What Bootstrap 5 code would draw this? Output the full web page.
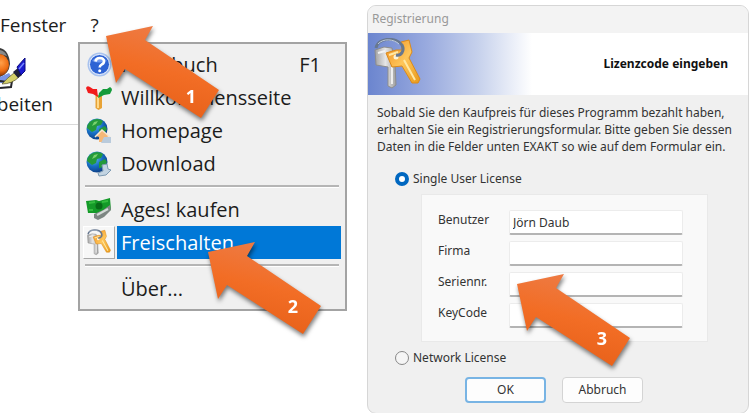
<!DOCTYPE html>
<html lang="de">
<head>
<meta charset="utf-8">
<meta name="viewport" content="width=device-width, initial-scale=1">
<title>Registrierung</title>
<link href="https://cdn.jsdelivr.net/npm/bootstrap@5.3.0/dist/css/bootstrap.min.css" rel="stylesheet">
<style>
body{background:#fff;color:#1c1c1c;font-family:"Noto Sans","Open Sans",sans-serif}
.stage{overflow:hidden}
.app-side{flex:0 0 367px;font-family:"Open Sans","Noto Sans",sans-serif;font-size:19px;line-height:24px}
.menubar{padding-top:13px;padding-left:0;gap:24px}
.menubar button,.tool,.entry,.act{background:none;border:0;padding:0;color:inherit}
.toolstrip{width:75%;height:88px;border-bottom:1px solid #d9d9d9}
.tool{width:53px;overflow:hidden;padding-top:10px}
.tool svg{width:30px;height:45px}
.help-menu{left:78px;top:42px;width:269px;background:#f0f0f0;border:2px solid #a3a3a3;padding:4px 4px 4px 3px;font-size:20px}
.entry{height:33px;width:100%}
.entry .pic{width:32px;height:33px;flex:none;margin-right:2px}
.entry .cap{flex:1;height:33px;padding:0 20px 0 4px;line-height:33px;text-align:left}
.entry.chosen .pic{background:#f7f7f7;border:1px solid #fff;border-right-color:#a8a8a8;border-bottom-color:#a8a8a8}
.entry.chosen .cap{background:#0078d7;color:#fff}
.rule{height:3px;margin:5px 2px;border-top:2px solid #b5b5b5;border-bottom:1px solid #fff}
.reg{margin-top:5px;background:#f0f0f0;border:1px solid #d6d6d6;border-radius:9px;font-size:12px;line-height:16px;overflow:hidden;color:#333}
.cap-bar{background:#f3f3f3;color:#999;height:27px;padding:5px 4px}
.banner{height:62px;background:linear-gradient(90deg,#6b85cf 0,#9aabdf 60px,#c6d1ec 110px,#fff 164px);padding:0 20px 0 6px;color:#111}
.intro{padding:9px 9px 0;line-height:17px}
.opt{margin-left:27px;gap:4px}
.opt input{appearance:none;width:14px;height:14px;margin:0;border:1px solid #888;border-radius:50%;background:#f5f5f5}
.opt input:checked{border:4px solid #0067c0;background:#fff}
.fields{margin:7px 40px 0 53px;background:#f9f9f9;border:1px solid #e9e9e9;padding:15px 24px 13px 16px;gap:6px}
.fields label{width:71px;flex:none;padding-bottom:6px}
.fields input{min-width:0;flex:1;height:25px;border:1px solid #ececec;border-bottom:2px solid #b4b4b4;border-radius:2px;background:#fff;padding:0 3px;color:#333}
.acts{gap:16px;padding:11px 0 10px;margin-right:8px}
.act{width:81px;height:26px;border:1px solid #d4d4d4;border-radius:4px;background:#fdfdfd}
.act.main{border:2px solid #78b4e4}
.pointer{width:130px;height:110px;pointer-events:none;overflow:visible;filter:drop-shadow(1px 3px 2px rgba(0,0,0,.5))}
.pointer text{font:bold 18px "Open Sans",sans-serif;fill:#fff;text-anchor:middle}
.p1{left:106px;top:26px}.p2{left:208px;top:242px}.p3{left:149px;top:268px}
</style>
<script src="https://cdn.jsdelivr.net/npm/bootstrap@5.3.0/dist/js/bootstrap.bundle.min.js"></script>
</head>
<body>
<svg width="0" height="0" class="position-absolute" aria-hidden="true">
<defs>
<linearGradient id="org" x1=".7" y1="0" x2=".4" y2="1"><stop offset="0" stop-color="#ed7d49"/><stop offset=".5" stop-color="#f26d25"/><stop offset="1" stop-color="#e65f18"/></linearGradient>
<radialGradient id="sea" cx=".35" cy=".3" r=".8"><stop offset="0" stop-color="#6cc5f5"/><stop offset=".5" stop-color="#176fc4"/><stop offset="1" stop-color="#0b3478"/></radialGradient>
<linearGradient id="gold" x1="0" y1="0" x2="1" y2="1"><stop offset="0" stop-color="#f08c1c"/><stop offset=".5" stop-color="#ffc65a"/><stop offset="1" stop-color="#e89a1a"/></linearGradient>
<linearGradient id="silver"><stop offset="0" stop-color="#a2a2a2"/><stop offset=".5" stop-color="#e6e6e6"/><stop offset="1" stop-color="#a0a0a0"/></linearGradient>
<radialGradient id="ball" cx=".6" cy=".4" r=".6"><stop offset="0" stop-color="#ffa04a"/><stop offset=".6" stop-color="#ee6d12"/><stop offset="1" stop-color="#8a3306"/></radialGradient>
<symbol id="arrow" viewBox="0 0 130 110" overflow="visible"><path d="M0 10 47 0 39 14 113 64 95 92 19 43 10 57Z" fill="url(#org)"/></symbol>
<symbol id="globe" viewBox="0 0 26 26"><circle cx="11" cy="11" r="10.5" fill="url(#sea)"/><path d="M5 3Q11-1 17 3L15 7 11 8 10 12 6 14 1 10Q1 6 5 3ZM13 11 19 8 21 11 18 16 13 17Z" fill="#249a3b"/><path d="M8 4 12 3 10 6 6 8Z" fill="#79d26e"/></symbol>
<symbol id="keys" viewBox="0 0 47 52">
<path d="M1 12 10 9 18 10 21 26 22 47 18 50 14 48 14 29 2 27Z" fill="url(#silver)" stroke="#8d8d8d"/><path d="M18 29V46" stroke="#fff" stroke-width="1.500"/><path d="M4 15 11 13" stroke="#f2f2f2" stroke-width="2"/>
<path d="M12 15 22 12 28 12 27 4 35 2 38 14 35 20 46 41 44 45 38 45 28 28 18 29Z" fill="url(#gold)" stroke="#dc8a1a"/><path d="M30 22 41 42M15 17 24 14" stroke="#ffe8a4" stroke-width="2"/><circle cx="22" cy="19" r="2.500" fill="#fff3d4"/>
<path d="M2 10C4-1 23-1 28 7C31 13 27 18 22 17" fill="none" stroke="#68788f" stroke-width="3"/><path d="M4 6C9 0 20 1 25 6" fill="none" stroke="#bfcbdc"/></symbol>
</defs></svg>
<main class="stage d-flex min-vh-100">
<section class="app-side position-relative">
<nav class="menubar d-flex"><button type="button">Fenster</button><button type="button">?</button></nav>
<div class="toolstrip">
<button class="tool d-flex flex-column align-items-end" type="button">
<svg class="align-self-start" viewBox="0 0 30 45" aria-hidden="true"><path d="M0 1Q9 3 10 17Q9 27 0 30Z" fill="#3b3b3b"/><path d="M0 3Q5 4 7 9L0 7Z" fill="#8a8a8a"/><ellipse cx="-1" cy="18" rx="10" ry="11" fill="url(#ball)"/><path d="M0 30 9 26 13 32 6 36H0Z" fill="#7b95e6"/><path d="M0 34 7 35 12 34 11 40 0 41" fill="none" stroke="#26262c" stroke-width="2"/><path d="M2 37Q7 31 14 26L19 30Q12 37 2 37Z" fill="#d4cf69" stroke="#54502a" stroke-width=".7"/><path d="M13 25 18 21 22 28 18 31Z" fill="#20203a"/><path d="M17 20 25 11 25 24 21 28Z" fill="#1b1bd0" stroke="#0b0b80"/><path d="M19 22 24 16" stroke="#7587ff" stroke-width="1.500"/></svg>
<span>Bearbeiten</span></button>
</div>
<div class="help-menu position-absolute z-1" role="menu">
<button class="entry d-flex" role="menuitem"><span class="pic d-flex align-items-center justify-content-center"><svg width="25" height="25" viewBox="0 0 25 25"><circle cx="12.500" cy="12.500" r="12" fill="#a8c2ee"/><circle cx="12.500" cy="12.500" r="10" fill="#2e63d4" stroke="#f3f7ff"/><path d="M5 9Q12 1 20 9Q12 12 5 9" fill="#7099ef"/><path d="M8.500 9.500Q9 6 12.700 6Q17 6 17 9.500Q17 11.500 14.500 12.700Q12.700 13.600 12.700 15.500" fill="none" stroke="#fff" stroke-width="2.600"/><circle cx="12.700" cy="18.800" r="1.500" fill="#fff"/></svg></span><span class="cap d-flex justify-content-between"><span>Handbuch</span><span>F1</span></span></button>
<button class="entry d-flex" role="menuitem"><span class="pic d-flex align-items-center justify-content-center"><svg width="26" height="26" viewBox="0 0 26 26"><path d="M9.500 10H16V23L12.500 25 9.500 23Z" fill="#e8a336"/><path d="M12 12V23" stroke="#ffd888" stroke-width="2"/><path d="M0 3Q1 0 4 2L7 4 11 4 12 12 7 9 2 8Z" fill="#f21b1b"/><path d="M12 13 13 8 17 4 21 4 24 2Q26 3 26 5L24 9 18 10Z" fill="#159b3b"/></svg></span><span class="cap">Willkommensseite</span></button>
<button class="entry d-flex" role="menuitem"><span class="pic d-flex align-items-center justify-content-center"><svg width="26" height="26" viewBox="0 0 26 26"><use href="#globe" width="26" height="26"/><path d="M10 18 16 12 23 18 21 19V24H13V19Z" fill="#f5b878"/><path d="M9 19 16 12 24 19" fill="none" stroke="#f8e6d0" stroke-width="1.500"/><path d="M18 19H25V25H15Z" fill="#bacbdc"/></svg></span><span class="cap">Homepage</span></button>
<button class="entry d-flex" role="menuitem"><span class="pic d-flex align-items-center justify-content-center"><svg width="26" height="26" viewBox="0 0 26 26"><use href="#globe" width="26" height="26"/><path d="M16 14 21 13 22 18 25 19 20 24 13 25 12 22 17 20Z" fill="#c3d4e2" stroke="#7e9bb3"/></svg></span><span class="cap">Download</span></button>
<div class="rule"></div>
<button class="entry d-flex" role="menuitem"><span class="pic d-flex align-items-center justify-content-center"><svg width="26" height="26" viewBox="0 0 26 26"><path d="M0 4 10 3 13 4 24 1 25 13 15 16 10 16 2 16Z" fill="#149a28"/><path d="M3 6 9 5M16 5 22 4M3 13 7 13" stroke="#35bd40" stroke-width="2"/><circle cx="13" cy="9" r="3.500" fill="#086b18"/><path d="M8 17 17 13 24 8 25 13 18 20 12 23 8 21Z" fill="#7d8683"/><path d="M11 18 22 12" stroke="#d4dad7" stroke-width="2"/></svg></span><span class="cap">Ages! kaufen</span></button>
<button class="entry chosen d-flex" role="menuitem"><span class="pic d-flex align-items-center justify-content-center"><svg width="24" height="27"><use href="#keys" width="24" height="27"/></svg></span><span class="cap">Freischalten</span></button>
<div class="rule"></div>
<button class="entry d-flex" role="menuitem"><span class="pic"></span><span class="cap">Über...</span></button>
</div>
<svg class="pointer p1 position-absolute z-2" viewBox="0 0 130 110"><use href="#arrow" width="130" height="110"/><text x="85" y="77">1</text></svg>
<svg class="pointer p2 position-absolute z-2" viewBox="0 0 130 110"><use href="#arrow" width="130" height="110"/><text x="85" y="71">2</text></svg>
</section>
<form class="reg flex-fill position-relative" onsubmit="return false">
<div class="cap-bar">Registrierung</div>
<header class="banner d-flex align-items-center justify-content-between"><svg width="47" height="52" aria-hidden="true"><use href="#keys" width="47" height="52"/></svg><strong>Lizenzcode eingeben</strong></header>
<p class="intro text-nowrap mb-3">Sobald Sie den Kaufpreis für dieses Programm bezahlt haben,<br>erhalten Sie ein Registrierungsformular. Bitte geben Sie dessen<br>Daten in die Felder unten EXAKT so wie auf dem Formular ein.</p>
<div class="opt d-flex align-items-center"><input type="radio" name="lic" id="single" checked><label for="single">Single User License</label></div>
<div class="fields d-flex flex-column">
<div class="d-flex align-items-center"><label for="user">Benutzer</label><input id="user" value="Jörn Daub"></div>
<div class="d-flex align-items-center"><label for="firm">Firma</label><input id="firm"></div>
<div class="d-flex align-items-center"><label for="serial">Seriennr.</label><input id="serial"></div>
<div class="d-flex align-items-center"><label for="key">KeyCode</label><input id="key"></div>
</div>
<div class="opt d-flex align-items-center mt-2"><input type="radio" name="lic" id="net"><label for="net">Network License</label></div>
<div class="acts d-flex justify-content-center"><button class="act main" type="submit">OK</button><button class="act" type="button">Abbruch</button></div>
<svg class="pointer p3 position-absolute z-2" viewBox="0 0 130 110"><use href="#arrow" width="130" height="110"/><text x="85" y="71">3</text></svg>
</form>
</main>
</body>
</html>
